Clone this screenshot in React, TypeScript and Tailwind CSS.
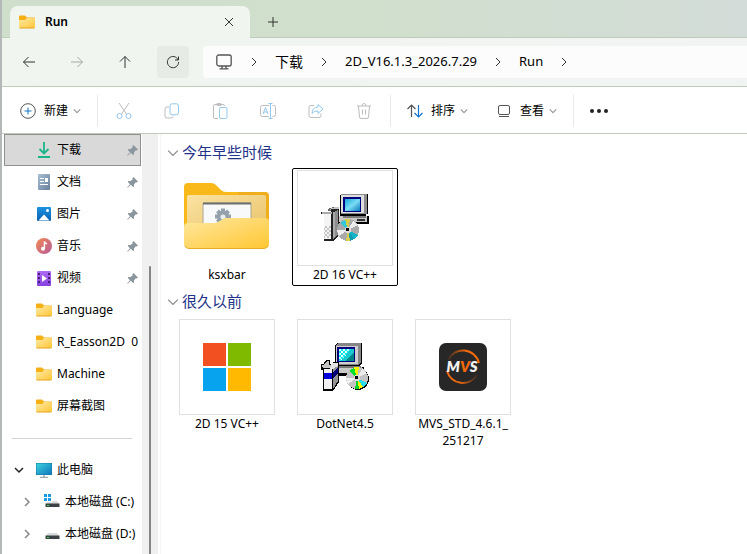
import type { ReactNode } from "react";

const fontUi = "font-['Noto_Sans','Noto_Sans_CJK_SC',sans-serif]";

function Chevron({ dir = "right", className = "" }: { dir?: "right" | "down"; className?: string }) {
  return (
    <svg viewBox="0 0 10 10" fill="none" stroke="currentColor" className={className} aria-hidden="true">
      <path d={dir === "right" ? "M3 1 L7 5 L3 9" : "M1 3 L5 7 L9 3"} />
    </svg>
  );
}

function FolderIcon() {
  return (
    <svg viewBox="0 0 16 14" className="h-[14px] w-4 shrink-0" aria-hidden="true">
      <defs>
        <linearGradient id="folderSmall" x1="0" y1="0" x2="1" y2="1">
          <stop offset="0" stopColor="#ffe9a3" />
          <stop offset="1" stopColor="#ffc83a" />
        </linearGradient>
      </defs>
      <path d="M0 1.5Q0 .5 1 .5h5l2 2h7q1 0 1 1V12H0z" fill="#f5b016" />
      <path d="M0 5h6l2-2h7q1 0 1 1v8q0 1-1 1H1q-1 0-1-1z" fill="url(#folderSmall)" />
      <path d="M.5 13h15" stroke="#e5a21c" />
    </svg>
  );
}

function BigFolder() {
  return (
    <svg viewBox="0 0 86 68" className="mb-1 h-[68px] w-[86px]" aria-hidden="true">
      <defs>
        <linearGradient id="bigFront" x1="0" y1="0" x2="1" y2="1">
          <stop offset="0" stopColor="#ffe8a0" />
          <stop offset="1" stopColor="#ffc733" />
        </linearGradient>
        <linearGradient id="bigInner" x1="0" y1="0" x2="1" y2="1">
          <stop offset="0" stopColor="#fbe3a2" />
          <stop offset="1" stopColor="#e8c26a" />
        </linearGradient>
      </defs>
      <path d="M0 5q0-4 4-4h23q3 0 5 2l5 5q2 2 5 2h39q4 0 4 4v46H0z" fill="#fab91b" />
      <path d="M54 10h27q4 0 4 4v30H54z" fill="#e5a81e" opacity=".55" />
      <path d="M3 15q0-2 2-2h75q2 0 2 2v35H3z" fill="url(#bigInner)" />
      <rect x="19" y="21" width="48" height="34" rx="1" fill="#f8f9fa" stroke="#a9a492" />
      <path d="M19 21.5h48" stroke="#6d716f" strokeWidth="2" />
      <g stroke="#94a0aa" strokeWidth="4">
        <path d="M39 26.500v16M31 34.500h16M33.500 29l11 11M44.500 29l-11 11" />
      </g>
      <circle cx="39" cy="34.500" r="6" fill="#94a0aa" />
      <circle cx="39" cy="35" r="2.500" fill="#e9edf0" />
      <path d="M0 45q0-4 4-4h26q2 0 4-1l5-3q2-1 4-1h38q4 0 4 4v22q0 4-4 4H4q-4 0-4-4z" fill="url(#bigFront)" />
      <path d="M1 64q1 2.500 4 2.500h75q3 0 4-2.500" fill="none" stroke="#e7ae28" />
    </svg>
  );
}

function Disc({ cx, cy, vivid }: { cx: number; cy: number; vivid?: boolean }) {
  return (
    <g transform={`translate(${cx} ${cy})`}>
      <circle cx={vivid ? 1 : 0} cy={vivid ? 1 : 0} r="11" fill={vivid ? "#000" : "#666"} />
      <circle r="11" fill={vivid ? "#c3c3c3" : "#a9a9a9"} />
      <path d="M0 0L-8-7L-3-10.500z" fill={vivid ? "#00e12b" : "#35c7d9"} />
      <path d="M0 0L-3-10.500L2-11z" fill={vivid ? "#fff200" : "#d5cc4a"} />
      <path d="M0 0L5-9L10-5z" fill="#ececec" />
      <path d="M0 0L-11 0L-9 6z" fill="#efefef" />
      <path d="M0 0L10 5L6 9z" fill={vivid ? "#25dcf0" : "#12b4c7"} />
      <path d="M0 0L6 9L2 11z" fill={vivid ? "#fff200" : "#0f9bb0"} />
      <path d="M0 0L2 11L-2 11z" fill={vivid ? "#00d22c" : "#d9cd52"} />
      <circle r="3" fill="#ddd" />
      <rect x="-2" y="-2" width="3" height="3" fill="#000" />
    </g>
  );
}

function InstallerGray() {
  return (
    <svg viewBox="0 0 48 48" shapeRendering="crispEdges" className="size-12" aria-hidden="true">
      <defs>
        <linearGradient id="screenGray" x1="0" y1="0" x2="1" y2="1">
          <stop offset="0" stopColor="#12a8dc" />
          <stop offset=".5" stopColor="#7bdcf5" />
          <stop offset="1" stopColor="#0679bd" />
        </linearGradient>
        <pattern id="dither" width="4" height="4" patternUnits="userSpaceOnUse">
          <rect width="4" height="4" fill="#f4f4f4" />
          <rect width="2" height="2" fill="#c4c4c4" />
          <rect x="2" y="2" width="2" height="2" fill="#c4c4c4" />
        </pattern>
      </defs>
      <path d="M19 1h2v-1h26v20h-2v2H19z" fill="#000" />
      <rect x="20" y="0" width="26" height="20" fill="#8d8d8d" />
      <rect x="20" y="1" width="23" height="18" fill="#dedede" />
      <rect x="22" y="3" width="18" height="15" fill="#00007e" />
      <rect x="24" y="5" width="15" height="12" fill="url(#screenGray)" />
      <rect x="18" y="22" width="30" height="8" fill="#000" />
      <rect x="18" y="22" width="28" height="6" fill="#c9c9c9" />
      <rect x="22" y="22" width="23" height="2" fill="#7b7b7b" />
      <rect x="36" y="25" width="8" height="2" fill="#333" />
      <path d="M7 15l5-2h6v4H7z" fill="#666" />
      <path d="M9 15l5-2h4v2h-5l-3 2z" fill="#c4c4c4" />
      <path d="M0 18h10v-3h8v26l-6 6H3V20H0z" fill="#222" />
      <rect x="1" y="18" width="10" height="2" fill="#aaa" />
      <rect x="3" y="20" width="7" height="25" fill="#f4f4f4" />
      <rect x="3" y="32" width="7" height="12" fill="url(#dither)" />
      <path d="M12 19l5-3v25l-5 4z" fill="#8c8c8c" />
      <rect x="12" y="18" width="2" height="25" fill="#aaa" />
      <Disc cx={27} cy={36} />
    </svg>
  );
}

function InstallerColor() {
  return (
    <svg viewBox="0 0 48 48" shapeRendering="crispEdges" className="size-12" aria-hidden="true">
      <defs>
        <pattern id="screenDither" width="4" height="4" patternUnits="userSpaceOnUse">
          <rect width="4" height="4" fill="#08e8ef" />
          <rect width="2" height="2" fill="#fff" />
          <rect x="2" y="2" width="2" height="2" fill="#c8ffff" />
        </pattern>
      </defs>
      <path d="M14 2l2-2h25v20l-3 3H14z" fill="#000" />
      <path d="M15 2l2-2h23v19l-3 3H15z" fill="#868686" />
      <rect x="15" y="3" width="22" height="18" fill="#cfcfcf" />
      <rect x="16" y="4" width="18" height="15" fill="#00007e" />
      <rect x="18" y="6" width="15" height="12" fill="url(#screenDither)" />
      <path d="M33 6v12H20z" fill="#008485" />
      <path d="M30 6h3v3l-9 9h-4z" fill="#19c9d0" />
      <rect x="16" y="24" width="27" height="9" fill="#000" />
      <rect x="16" y="24" width="25" height="6" fill="#cacaca" />
      <rect x="18" y="23" width="22" height="2" fill="#777" />
      <path d="M0 21h3v-2l2-2h4v4h3v-2h6v20l-6 9H2V27H0z" fill="#000" />
      <path d="M1 22h2l3-4h2v4h4v3H2z" fill="#c4c4c4" />
      <rect x="3" y="26" width="8" height="20" fill="#f1f1f1" />
      <rect x="3" y="30" width="8" height="6" fill="#0000d8" />
      <path d="M12 26l5-4v16l-5 8z" fill="#939393" />
      <path d="M12 29l5-4v5l-5 5z" fill="#000078" />
      <path d="M11 20h6v3l-5 3h-3z" fill="#e4e4e4" />
      <Disc cx={36} cy={35} vivid />
    </svg>
  );
}

function MicrosoftLogo() {
  return (
    <div className="grid size-12 grid-cols-2 gap-0.5" aria-hidden="true">
      <span className="bg-[#f35022]" />
      <span className="bg-[#7fb900]" />
      <span className="bg-[#07a3ef]" />
      <span className="bg-[#ffb900]" />
    </div>
  );
}

function MvsLogo() {
  return (
    <svg viewBox="0 0 48 48" className="size-12" aria-label="MVS">
      <defs>
        <linearGradient id="ringTop" x1="0" x2="1">
          <stop offset="0" stopColor="#f36a0c" stopOpacity=".1" />
          <stop offset=".6" stopColor="#f36a0c" />
        </linearGradient>
        <linearGradient id="ringBottom" x1="1" x2="0">
          <stop offset="0" stopColor="#f36a0c" stopOpacity=".1" />
          <stop offset=".6" stopColor="#f36a0c" />
        </linearGradient>
      </defs>
      <rect width="48" height="48" rx="7" fill="#272727" />
      <path d="M9 17A16.500 16.500 0 0 1 40 20" fill="none" stroke="url(#ringTop)" strokeWidth="2" />
      <path d="M38 32A16.500 16.500 0 0 1 8 28" fill="none" stroke="url(#ringBottom)" strokeWidth="2" />
      <text x="23" y="29" textAnchor="middle" fontSize="15" fontWeight="800" fontStyle="italic" fontFamily="Lato, sans-serif">
        <tspan fill="#f1f1f1">M</tspan>
        <tspan fill="#f36a0c">V</tspan>
        <tspan fill="#f1f1f1">S</tspan>
      </text>
    </svg>
  );
}

function PinIcon() {
  return (
    <svg viewBox="0 0 11 11" className="size-[11px] shrink-0" fill="#8b979e" aria-hidden="true">
      <path d="M6.500 0L11 4.500 9.500 5.500 8.500 5.500 7 7.500 7 9.500 6 10 3.800 7.800 .7 10.700 .2 10.200 3 7.200 .8 5 1.500 4 3.500 4 5.500 2.400 5.500 1z" />
    </svg>
  );
}

function DownloadIcon() {
  return (
    <svg viewBox="0 0 16 16" className="size-4" fill="none" stroke="#1bb58a" strokeWidth="1.800" aria-hidden="true">
      <path d="M8 0v11M3.500 7L8 11.500 12.500 7M2 15h12" />
    </svg>
  );
}

function DocIcon() {
  return (
    <svg viewBox="0 0 16 16" className="size-4" aria-hidden="true">
      <defs>
        <linearGradient id="doc" x1="0" y1="0" x2="1" y2="1">
          <stop offset="0" stopColor="#a9bfd2" />
          <stop offset="1" stopColor="#66809c" />
        </linearGradient>
      </defs>
      <rect x="2" width="12" height="16" rx="1" fill="url(#doc)" />
      <path d="M4 4.500h4M4 7.500h4M4 10.500h8" stroke="#fff" />
      <rect x="9" y="4" width="3" height="4" fill="#fff" />
    </svg>
  );
}

function PictureIcon() {
  return (
    <svg viewBox="0 0 16 16" className="size-4" aria-hidden="true">
      <defs>
        <linearGradient id="pic" x1="0" y1="0" x2="0" y2="1">
          <stop offset="0" stopColor="#1d93e0" />
          <stop offset="1" stopColor="#0a62b4" />
        </linearGradient>
      </defs>
      <rect x="1" y="1" width="14" height="14" rx="1" fill="url(#pic)" />
      <path d="M2.500 14.500L8 8.500l5.500 6z" fill="#fff" />
      <circle cx="11.500" cy="4.500" r="1.500" fill="#fff" />
    </svg>
  );
}

function MusicIcon() {
  return (
    <svg viewBox="0 0 16 16" className="size-4" aria-hidden="true">
      <defs>
        <linearGradient id="mus" x1="0" y1="0" x2="1" y2="1">
          <stop offset="0" stopColor="#f08a50" />
          <stop offset="1" stopColor="#b95a9c" />
        </linearGradient>
      </defs>
      <circle cx="8" cy="8" r="8" fill="url(#mus)" />
      <circle cx="7" cy="10.800" r="2" fill="#fff" />
      <path d="M8.400 11V3.500q.5 2 2.600 2.300" fill="none" stroke="#fff" strokeWidth="1.400" />
    </svg>
  );
}

function VideoIcon() {
  return (
    <svg viewBox="0 0 16 16" className="size-4" aria-hidden="true">
      <defs>
        <linearGradient id="vid" x1="0" y1="0" x2="0" y2="1">
          <stop offset="0" stopColor="#b06bf3" />
          <stop offset="1" stopColor="#8540e0" />
        </linearGradient>
      </defs>
      <rect x="1" y="1" width="14" height="15" rx="1" fill="url(#vid)" />
      <path d="M3 3v12M13 3v12" stroke="#43207a" strokeWidth="2" strokeDasharray="2 2" />
      <path d="M6 5l5 3.500L6 12z" fill="#fff" />
    </svg>
  );
}

function PcIcon() {
  return (
    <svg viewBox="0 0 16 16" className="size-4" aria-hidden="true">
      <defs>
        <linearGradient id="pc" x1="0" y1="0" x2="1" y2="1">
          <stop offset="0" stopColor="#3bd3dc" />
          <stop offset="1" stopColor="#1176bf" />
        </linearGradient>
      </defs>
      <rect y="1" width="16" height="12" fill="#167aa8" />
      <rect x=".5" y="1.500" width="15" height="11" fill="url(#pc)" />
      <path d="M8 13v2M4 15.500h8" stroke="#9fa9b0" strokeWidth="1.500" />
    </svg>
  );
}

function DriveIcon({ system }: { system?: boolean }) {
  return (
    <svg viewBox="0 0 16 16" className="size-4" aria-hidden="true">
      <path d="M4 7h9l2 3H2z" fill="#d9dbdd" />
      <rect x="1.500" y="9.500" width="14" height="3.500" fill="#3b4145" />
      <rect x="3" y="11" width="2" height="1" fill="#32e03c" />
      {system && (
        <>
          <rect width="8" height="8" fill="#fff" />
          <path d="M0 0h3v3H0zM4 0h3v3H4zM0 4h3v3H0zM4 4h3v3H4z" fill="#199be8" />
        </>
      )}
    </svg>
  );
}

function ToolIcon({ children }: { children: ReactNode }) {
  return (
    <svg viewBox="0 0 16 16" className="size-4" fill="none" stroke="#bdbdbd" aria-hidden="true">
      {children}
    </svg>
  );
}

const BLUE = "#93c7ec";

const tools: { name: string; icon: ReactNode }[] = [
  {
    name: "剪切",
    icon: (
      <ToolIcon>
        <path d="M3 0l7.500 11M13 0L5.500 11" />
        <circle cx="3.500" cy="13" r="2.500" stroke={BLUE} />
        <circle cx="12.500" cy="13" r="2.500" stroke={BLUE} />
      </ToolIcon>
    ),
  },
  {
    name: "复制",
    icon: (
      <ToolIcon>
        <path d="M5 4H3Q1 4 1 6v7q0 2 2 2h4q2 0 2-1.500" />
        <rect x="6" y=".8" width="8.500" height="11" rx="2" stroke={BLUE} />
      </ToolIcon>
    ),
  },
  {
    name: "粘贴",
    icon: (
      <ToolIcon>
        <path d="M6 15.500H3q-1.500 0-1.500-1.500V3Q1.500 1.500 3 1.500h8q1.500 0 1.500 1.500" />
        <rect x="4.500" y=".5" width="5" height="2" rx="1" />
        <rect x="7.500" y="4.500" width="7.500" height="11" rx="1.500" stroke={BLUE} />
      </ToolIcon>
    ),
  },
  {
    name: "重命名",
    icon: (
      <ToolIcon>
        <path d="M9 2.500H2.500q-2 0-2 2v7q0 2 2 2H9M12.500 2.500h1q2 0 2 2v7q0 2-2 2h-1" />
        <path d="M3 11l2.500-6.500L8 11M4 9h3M10.500.5v15M8.500.5h4M8.500 15.500h4" stroke={BLUE} />
      </ToolIcon>
    ),
  },
  {
    name: "共享",
    icon: (
      <ToolIcon>
        <path d="M6 2.500H3q-2 0-2 2v8q0 2 2 2h8q2 0 2-2v-2" />
        <path d="M10 1.500l5 4.500-5 4.500V8q-4-.5-6 2.500 0-6 6-6.500z" stroke={BLUE} strokeLinejoin="round" />
      </ToolIcon>
    ),
  },
  {
    name: "删除",
    icon: (
      <ToolIcon>
        <path d="M1 3h14M6 3q0-2.500 2-2.500T10 3M2.500 3l1 11q.2 1.500 1.500 1.500h6q1.300 0 1.500-1.500l1-11M6.500 6.500v5M9.500 6.500v5" />
      </ToolIcon>
    ),
  },
];

const quick: { label: string; icon: ReactNode; pinned?: boolean; selected?: boolean }[] = [
  { label: "下载", icon: <DownloadIcon />, pinned: true, selected: true },
  { label: "文档", icon: <DocIcon />, pinned: true },
  { label: "图片", icon: <PictureIcon />, pinned: true },
  { label: "音乐", icon: <MusicIcon />, pinned: true },
  { label: "视频", icon: <VideoIcon />, pinned: true },
  { label: "Language", icon: <FolderIcon /> },
  { label: "R_Easson2D  0", icon: <FolderIcon /> },
  { label: "Machine", icon: <FolderIcon /> },
  { label: "屏幕截图", icon: <FolderIcon /> },
];

function Divider() {
  return <span className="h-8 w-px shrink-0 bg-[#e9e9e9]" />;
}

function Arrow({ d, muted }: { d: string; muted?: boolean }) {
  return (
    <svg viewBox="0 0 14 14" className={`size-[14px] ${muted ? "text-[#a5a8a5]" : "text-[#333]"}`} fill="none" stroke="currentColor" aria-hidden="true">
      <path d={d} />
    </svg>
  );
}

function Crumb({ label, latin }: { label: string; latin?: boolean }) {
  return (
    <>
      <button className={`px-4 whitespace-nowrap ${latin ? "text-[13px]" : "text-sm"}`}>{label}</button>
      <Chevron className="size-[10px] shrink-0 text-[#333]" />
    </>
  );
}

function Tile({ label, children, selected, bare }: { label: string; children: ReactNode; selected?: boolean; bare?: boolean }) {
  return (
    <button
      className={`flex w-[106px] flex-col items-center rounded-xs border pt-px pb-0.5 ${selected ? "border-black" : "border-transparent"}`}
    >
      <span className={`flex size-24 items-center justify-center border ${bare ? "border-transparent" : "border-[#e0e0e0]"}`}>{children}</span>
      <span className="w-24 text-center text-xs leading-[17px] break-all">{label}</span>
    </button>
  );
}

function Group({ title, children }: { title: string; children: ReactNode }) {
  return (
    <section>
      <h2 className="flex h-[31px] items-center gap-[3px] pl-[6px] text-[15px] text-[#1e3287]">
        <Chevron dir="down" className="size-3 text-[#888]" />
        {title}
      </h2>
      <div className="flex flex-wrap gap-3 pl-[13px]">{children}</div>
    </section>
  );
}

export default function App() {
  return (
    <div className={`flex h-screen flex-col overflow-hidden border-l-2 border-[#b5b8b9] bg-white text-black ${fontUi}`}>
      <header className="shrink-0 bg-linear-to-r from-[#cfdfcb] via-[#d1dfcd] to-[#d3dcd8]">
        <div className="flex h-[38px] items-end border-b border-[#c0ccba] pl-2">
          <div className="-mb-px flex h-8 w-60 items-center rounded-t-lg bg-[#f0f5ef] pr-[14px] pl-[9px]">
            <FolderIcon />
            <span className="ml-[10px] flex-1 text-xs font-semibold">Run</span>
            <button aria-label="关闭标签页">
              <Arrow d="M3 3l8 8M11 3l-8 8" />
            </button>
          </div>
          <button aria-label="新建标签页" className="mb-2 ml-4">
            <Arrow d="M7 2v10M2 7h10" />
          </button>
        </div>
        <nav className="flex h-12 items-center bg-linear-to-r from-[#f0f5ef] to-[#f2f4f3] pl-[11px]">
          <div className="flex gap-4">
            <button aria-label="后退" className="flex size-8 items-center justify-center">
              <Arrow d="M13 7H1.500M6.500 2l-5 5 5 5" />
            </button>
            <button aria-label="前进" className="flex size-8 items-center justify-center">
              <Arrow d="M1 7h11.500M7.500 2l5 5-5 5" muted />
            </button>
            <button aria-label="向上" className="flex size-8 items-center justify-center">
              <Arrow d="M7 13V1.500M2 6.500l5-5 5 5" />
            </button>
            <button aria-label="刷新" className="flex size-8 items-center justify-center rounded-sm bg-[#e6ebe5]">
              <Arrow d="M12.200 5A5.600 5.600 0 1 0 12.600 7M12.500 1.500V5H9" />
            </button>
          </div>
          <div className="ml-[14px] flex h-8 flex-1 items-center rounded-l-sm bg-[#fcfcfc] pl-[13px]">
            <svg viewBox="0 0 16 16" className="size-4 shrink-0" fill="none" stroke="#555" aria-hidden="true">
              <rect x=".8" y="1" width="14.400" height="11" rx="2" strokeWidth="1.300" />
              <path d="M6 12v2.500M10 12v2.500M3.500 14.800h9" strokeWidth="1.300" />
            </svg>
            <Chevron className="ml-[17px] size-[10px] shrink-0 text-[#333]" />
            <Crumb label="下载" />
            <Crumb label="2D_V16.1.3_2026.7.29" latin />
            <Crumb label="Run" latin />
          </div>
        </nav>
      </header>

      <div className="flex h-12 shrink-0 items-center border-y border-[#bfccb9] pt-0.5 text-xs">
        <button className="mr-4 ml-[18px] flex items-center">
          <svg viewBox="0 0 16 16" className="mr-2 size-4" fill="none" stroke="#555" aria-hidden="true">
            <circle cx="8" cy="8" r="7.300" />
            <path d="M8 4.500v7M4.500 8h7" stroke="#1474c4" />
          </svg>
          新建
          <Chevron dir="down" className="ml-[5px] size-2 stroke-[1.500] text-[#999]" />
        </button>
        <Divider />
        <div className="mx-[18px] flex gap-8">
          {tools.map((t) => (
            <button key={t.name} aria-label={t.name} disabled>
              {t.icon}
            </button>
          ))}
        </div>
        <Divider />
        <button className="ml-4 flex items-center">
          <svg viewBox="0 0 16 16" className="mr-2 size-4" fill="none" strokeWidth="1.200" aria-hidden="true">
            <path d="M4.500 14V2M.5 6l4-4 4 4" stroke="#555" />
            <path d="M11.500 2v12M7.500 10l4 4 4-4" stroke="#1474d4" />
          </svg>
          排序
          <Chevron dir="down" className="ml-[5px] size-2 stroke-[1.500] text-[#999]" />
        </button>
        <button className="mr-4 ml-7 flex items-center">
          <svg viewBox="0 0 16 16" className="mr-2 size-4" fill="none" stroke="#555" aria-hidden="true">
            <rect x="2.500" y="2.500" width="11" height="9" rx="1.500" />
            <path d="M3 13.500h10" />
          </svg>
          查看
          <Chevron dir="down" className="ml-[5px] size-2 stroke-[1.500] text-[#999]" />
        </button>
        <Divider />
        <button aria-label="更多" className="ml-4 flex gap-[3px]">
          <span className="size-1 rounded-full bg-[#222]" />
          <span className="size-1 rounded-full bg-[#222]" />
          <span className="size-1 rounded-full bg-[#222]" />
        </button>
      </div>

      <div className="flex min-h-0 flex-1">
        <aside className="flex w-[156px] shrink-0 overflow-hidden">
          <nav className="w-[140px] overflow-hidden text-xs whitespace-pre">
            {quick.map((q) => (
              <button
                key={q.label}
                className={`ml-0.5 flex h-8 w-[137px] items-center gap-[5px] overflow-hidden border pr-0.5 pl-[31px] text-left ${q.selected ? "border-[#8f8f8f] bg-[#d9d9d9]" : "border-transparent"}`}
              >
                {q.icon}
                <span className="flex-1">{q.label}</span>
                {q.pinned && <PinIcon />}
              </button>
            ))}
            <hr className="mx-[10px] mt-4 mb-[15px] border-[#d4d4d4]" />
            <button className="flex h-8 items-center gap-[5px] pl-3">
              <Chevron dir="down" className="mr-[7px] size-[10px] stroke-[1.500] text-[#222]" />
              <PcIcon />
              此电脑
            </button>
            <button className="flex h-8 items-center gap-[5px] pl-5">
              <Chevron className="mr-[7px] size-[10px] stroke-[1.500] text-[#888]" />
              <DriveIcon system />
              本地磁盘 (C:)
            </button>
            <button className="flex h-8 items-center gap-[5px] pl-5">
              <Chevron className="mr-[7px] size-[10px] stroke-[1.500] text-[#888]" />
              <DriveIcon />
              本地磁盘 (D:)
            </button>
          </nav>
          <div className="flex w-4 justify-center bg-[#f0f0f0] pt-[132px]">
            <div className="w-0.5 rounded-t bg-[#858585]" />
          </div>
        </aside>
        <main className="ml-0.5 min-w-0 flex-1 border-l border-[#f5f5f5] pt-[3px]">
          <Group title="今年早些时候">
            <Tile label="ksxbar" bare>
              <BigFolder />
            </Tile>
            <Tile label="2D 16 VC++" selected>
              <InstallerGray />
            </Tile>
          </Group>
          <Group title="很久以前">
            <Tile label="2D 15 VC++">
              <MicrosoftLogo />
            </Tile>
            <Tile label="DotNet4.5">
              <InstallerColor />
            </Tile>
            <Tile label="MVS_STD_4.6.1_251217">
              <MvsLogo />
            </Tile>
          </Group>
        </main>
      </div>
    </div>
  );
}
